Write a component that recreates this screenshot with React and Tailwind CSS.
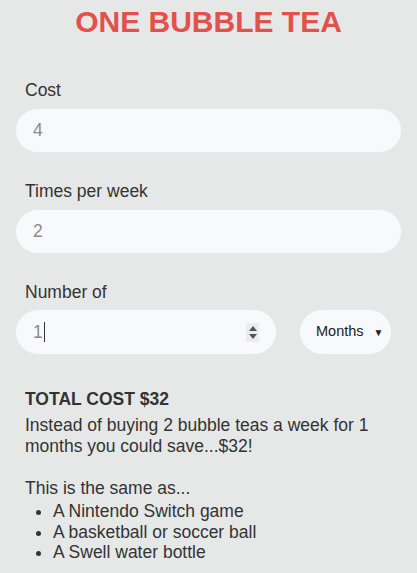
export default function App() {
  const font = { fontFamily: '"Liberation Sans", Arial, sans-serif' };
  return (
    <div style={font} className="min-h-[573px] w-full bg-[#e6e8e8] text-[#333333] px-4">
      <h1 className="text-center text-[30px] font-bold leading-none text-[#e2514b] pt-[6.5px]">ONE BUBBLE TEA</h1>

      <div className="mt-[43.5px] pl-[9px] text-[17.5px] leading-5">Cost</div>
      <div className="mt-[9px] h-[43px] rounded-full bg-[#f8f9fc] flex items-center pl-[17px] text-[17.5px] text-[#8a8a8a]">4</div>

      <div className="mt-[29px] pl-[9px] text-[17.5px] leading-5">Times per week</div>
      <div className="mt-[9px] h-[43px] rounded-full bg-[#f8f9fc] flex items-center pl-[17px] text-[17.5px] text-[#8a8a8a]">2</div>

      <div className="mt-[29px] pl-[9px] text-[17.5px] leading-5">Number of</div>
      <div className="mt-[8px] flex gap-[24px]">
        <div className="h-[44px] w-[260px] rounded-full bg-[#f8f9fc] flex items-center pl-[17px] pr-[17px] text-[17.5px] text-[#8a8a8a]">
          <span>1</span>
          <span className="inline-block w-px h-[20px] bg-[#333] ml-[1px]"></span>
          <span className="ml-auto flex flex-col items-center justify-center gap-[3px] w-[13px] h-[19px] bg-[#ececec]">
            <span className="block w-0 h-0 border-l-[4px] border-r-[4px] border-b-[5px] border-l-transparent border-r-transparent border-b-[#555]"></span>
            <span className="block w-0 h-0 border-l-[4px] border-r-[4px] border-t-[5px] border-l-transparent border-r-transparent border-t-[#555]"></span>
          </span>
        </div>
        <div className="h-[44px] w-[91px] rounded-full bg-[#f8f9fc] flex items-center pl-[16px] text-[14.5px] text-[#222]">
          <span>Months</span>
          <span className="ml-[10px] text-[10px]">▼</span>
        </div>
      </div>

      <div className="mt-[35px] pl-[9px] pr-[16px]">
        <div className="text-[17.5px] font-bold leading-5">TOTAL COST $32</div>
        <p className="mt-[5.5px] text-[17.5px] leading-[21px]">Instead of buying 2 bubble teas a week for 1 months you could save...$32!</p>
        <p className="mt-[21.5px] text-[17.5px] leading-[21px]">This is the same as...</p>
        <ul className="list-disc pl-[28px] text-[17.5px] leading-[20.5px] mt-[2px]">
          <li>A Nintendo Switch game</li>
          <li>A basketball or soccer ball</li>
          <li>A Swell water bottle</li>
        </ul>
      </div>
    </div>
  );
}
